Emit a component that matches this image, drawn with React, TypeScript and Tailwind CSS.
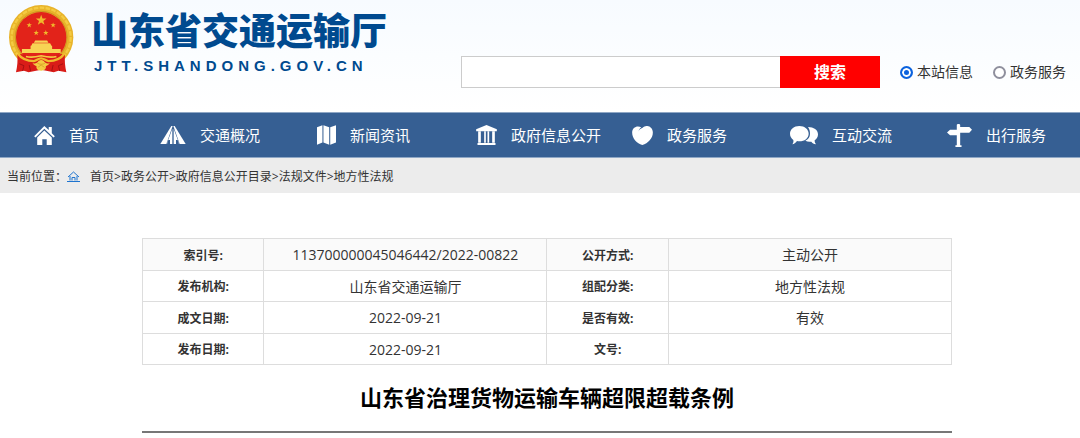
import type { ReactNode } from 'react';

const NAV_ITEMS: ReadonlyArray<{ label: string; icon: ReactNode }> = [
  { label: '首页', icon: <HomeIcon /> },
  { label: '交通概况', icon: <RoadIcon /> },
  { label: '新闻资讯', icon: <MapIcon /> },
  { label: '政府信息公开', icon: <BankIcon /> },
  { label: '政务服务', icon: <HeartIcon /> },
  { label: '互动交流', icon: <ChatIcon /> },
  { label: '出行服务', icon: <SignpostIcon /> },
];

const CRUMBS = ['首页', '政务公开', '政府信息公开目录', '法规文件', '地方性法规'];

const INFO_ROWS: ReadonlyArray<[string, string, string, string]> = [
  ['索引号:', '113700000045046442/2022-00822', '公开方式:', '主动公开'],
  ['发布机构:', '山东省交通运输厅', '组配分类:', '地方性法规'],
  ['成文日期:', '2022-09-21', '是否有效:', '有效'],
  ['发布日期:', '2022-09-21', '文号:', ''],
];

const STAR = 'M0-10 2.4-3.2 9.5-3.1 3.8 1.2 5.9 8.1 0 4 -5.9 8.1 -3.8 1.2 -9.5-3.1 -2.4-3.2Z';

function Emblem() {
  return (
    <svg width="65" height="69" viewBox="27 15 196 208" aria-hidden>
      <circle cx="124" cy="112" r="97" fill="#e8b32a" />
      <circle cx="124" cy="112" r="89" fill="none" stroke="#f4cb42" strokeWidth="7" strokeDasharray="14 4" />
      <circle cx="124" cy="112" r="78" fill="none" stroke="#cf9420" strokeWidth="3" />
      <circle cx="124" cy="112" r="76" fill="#e2231a" />
      <g fill="#f0b92c">
        <path d={STAR} transform="translate(124 61) scale(1.7)" />
        <path d={STAR} transform="translate(88 76) scale(.85)" />
        <path d={STAR} transform="translate(160 76) scale(.85)" />
        <path d={STAR} transform="translate(109 99) scale(.85)" />
        <path d={STAR} transform="translate(138 99) scale(.85)" />
      </g>
      <path d="M106 122h36l4 7h-44zM98 130h53l4 8H94zM92 138h65v10H92zM66 148h117v12H66z" fill="#f7d454" />
      <path d="M52 164c12-4 24 0 38 6h68c14-6 26-10 38-6-2 18 0 36 4 54l-24-5-14 5-38-8-38 8-14-5-24 5c4-18 6-36 4-54z" fill="#d91c18" />
      <path d="M58 192l14 6-4 16M190 192l-14 6 4 16M88 196l4 18M160 196l-4 18" fill="none" stroke="#a50f12" strokeWidth="3" />
      <path d="M54 162c10 14 28 22 48 22 8 0 12-8 22-8s14 8 22 8c20 0 38-8 48-22" fill="none" stroke="#f0b92c" strokeWidth="7" />
      <path d="M78 170c12 4 30 2 46-2 16 4 34 6 46 2" fill="none" stroke="#f4cb42" strokeWidth="5" />
      <path d="M98 190c8 4 14 0 18-6 5-4 11-4 16 0 4 6 10 10 18 6-3 6-8 8-12 9 2 9-5 14-14 14s-16-5-14-14c-4-1-9-3-12-9z" fill="#f4cb42" />
      <path d="M112 190c7 5 17 5 24 0M114 203l10-7 10 7" fill="none" stroke="#cf9420" strokeWidth="2" />
    </svg>
  );
}

function HomeIcon() {
  return (
    <svg width="21" height="19" viewBox="0 0 61 56" fill="currentColor" aria-hidden>
      <path d="M30 0 43 12V3h9v18l9 9-4 4L30 8 4 34l-4-4z" />
      <path d="M30 13 52 34v22H37V39H24v17H9V34z" />
    </svg>
  );
}

function RoadIcon() {
  return (
    <svg width="26" height="18" viewBox="0 0 76 54" fill="currentColor" aria-hidden>
      <path d="M33 0h4L18 54H0z" />
      <path d="M36 8v46h-7V42h-5l-4 12h-1z" />
      <path d="M43 0h-4l19 54h18z" />
      <path d="M40 8v46h7V42h5l4 12h1z" />
    </svg>
  );
}

function MapIcon() {
  return (
    <svg width="19" height="20" viewBox="0 0 56 58" fill="currentColor" aria-hidden>
      <path d="M0 6 16 0v51L0 58zM19 0l17 6v52l-17-7zM39 6l17-6v51l-17 7z" />
    </svg>
  );
}

function BankIcon() {
  return (
    <svg width="21" height="20" viewBox="0 0 62 60" fill="currentColor" aria-hidden>
      <path d="M31 0 62 13v6H0v-6z" />
      <path d="M6 19h8v34H6zM24 19h5v34h-5zM34 19h5v34h-5zM48 19h8v34h-8zM4 54h54v6H4z" />
    </svg>
  );
}

function HeartIcon() {
  return (
    <svg width="21" height="19" viewBox="0 0 61 56" fill="currentColor" aria-hidden>
      <path d="M27 4C15-3 0 4 0 19c0 18 14 32 30 37 17-5 31-20 31-37C61 2 43-6 31 5c-6 3-11 6-12 11 1-6 4-9 8-12z" />
    </svg>
  );
}

function ChatIcon() {
  return (
    <svg width="28" height="19" viewBox="0 0 84 57" fill="currentColor" aria-hidden>
      <path d="M28 0c16 0 28 10 28 23S44 46 28 46c-3 0-5 0-7-1-4 6-9 9-14 10 3-4 4-8 3-13C4 37 0 31 0 23 0 10 12 0 28 0z" />
      <path d="M54 3c17 0 30 9 30 22 0 8-4 14-10 18 0 5 1 8 4 12-7-1-11-4-14-8-7 1-13 0-18-3 9-4 14-12 14-21 0-8-2-14-6-20z" />
    </svg>
  );
}

function SignpostIcon() {
  return (
    <svg width="25" height="23" viewBox="0 0 74 68" fill="currentColor" aria-hidden>
      <path d="M29 3c0-4 10-4 10 0v6h27l8 8-8 9H39v37h4v5H25v-5h4V33H9l-9-8 9-8h20z" />
    </svg>
  );
}

function CrumbHomeIcon() {
  return (
    <svg width="13" height="11" viewBox="0 0 13 11" fill="none" stroke="#1f74cf" aria-hidden>
      <path d="M1 6 6.500 1 12 6M3 5v4.500M10 5v4.500M5 9.500V6.500h3v3M0 10.500h13" />
    </svg>
  );
}

function ScopeRadio({ label, defaultChecked = false }: { label: string; defaultChecked?: boolean }) {
  return (
    <label className="flex items-center gap-1 text-sm whitespace-nowrap text-[#333]">
      <input
        type="radio"
        name="scope"
        defaultChecked={defaultChecked}
        className="size-[13px] shrink-0 appearance-none rounded-full border-2 border-[#8f8f9d] bg-white checked:border-[#0b62de] checked:bg-[#0b62de] checked:shadow-[inset_0_0_0_2px_white]"
      />
      {label}
    </label>
  );
}

export default function App() {
  return (
    <div className="min-h-screen bg-white font-['Open_Sans','Noto_Sans_CJK_SC',sans-serif] text-[#333]">
      <header className="flex h-28 items-start justify-between bg-linear-to-b from-[#f7fbff] to-white pr-[14px] pl-[9px]">
        <a href="#" className="flex items-start pt-[5px]">
          <Emblem />
          <div className="pl-[17px] text-[#004a8f]">
            <div className="text-[37px] leading-[52px] font-black whitespace-nowrap">山东省交通运输厅</div>
            <div className="pl-[3px] font-['Liberation_Sans',sans-serif] text-[15px] leading-[18px] font-bold tracking-[5px]">
              JTT.SHANDONG.GOV.CN
            </div>
          </div>
        </a>
        <form className="flex items-center gap-5 pt-14" onSubmit={(e) => e.preventDefault()}>
          <div className="flex h-8">
            <input
              type="text"
              aria-label="搜索"
              className="w-[319px] border border-r-0 border-[#ccc] bg-white px-2 text-sm outline-none"
            />
            <button type="submit" className="w-25 bg-[#ff0000] text-base font-bold text-white">
              搜索
            </button>
          </div>
          <ScopeRadio label="本站信息" defaultChecked />
          <ScopeRadio label="政务服务" />
        </form>
      </header>

      <nav className="grid h-[46px] grid-cols-[126fr_157fr_159fr_156fr_158fr_157fr_133fr] items-center border-y border-[#8fa7c5] bg-[#365f93] pl-[34px] text-white">
        {NAV_ITEMS.map((item) => (
          <a key={item.label} href="#" className="flex items-center gap-[14px] text-[15px] whitespace-nowrap">
            {item.icon}
            {item.label}
          </a>
        ))}
      </nav>

      <div className="flex h-[35px] items-center bg-[#ececec] pt-0.5 pl-[7px] text-xs whitespace-nowrap">
        <span>当前位置：</span>
        <a href="#" aria-label="首页">
          <CrumbHomeIcon />
        </a>
        <div className="flex pl-[10px]">
          {CRUMBS.map((crumb, i) => (
            <span key={crumb}>
              {i > 0 && '>'}
              <a href="#">{crumb}</a>
            </span>
          ))}
        </div>
      </div>

      <main className="pt-[45px] pr-32 pl-[142px]">
        <table className="h-[127px] w-full table-fixed border-collapse text-center text-sm">
          <colgroup>
            <col className="w-[15%]" />
            <col className="w-[35%]" />
            <col className="w-[15%]" />
            <col className="w-[35%]" />
          </colgroup>
          <tbody>
            {INFO_ROWS.map(([nameA, valueA, nameB, valueB]) => (
              <tr key={nameA} className="first:bg-[#fafafa]">
                <th scope="row" className="border border-[#ddd] pt-[3px] text-xs font-bold">{nameA}</th>
                <td className="border border-[#ddd] pt-0.5">{valueA}</td>
                <th scope="row" className="border border-[#ddd] pt-[3px] text-xs font-bold">{nameB}</th>
                <td className="border border-[#ddd] pt-0.5">{valueB}</td>
              </tr>
            ))}
          </tbody>
        </table>
        <h1 className="border-b-2 border-[#777] pt-4 pb-[18px] text-center text-[22px] leading-8 font-bold text-black">
          山东省治理货物运输车辆超限超载条例
        </h1>
      </main>
    </div>
  );
}
